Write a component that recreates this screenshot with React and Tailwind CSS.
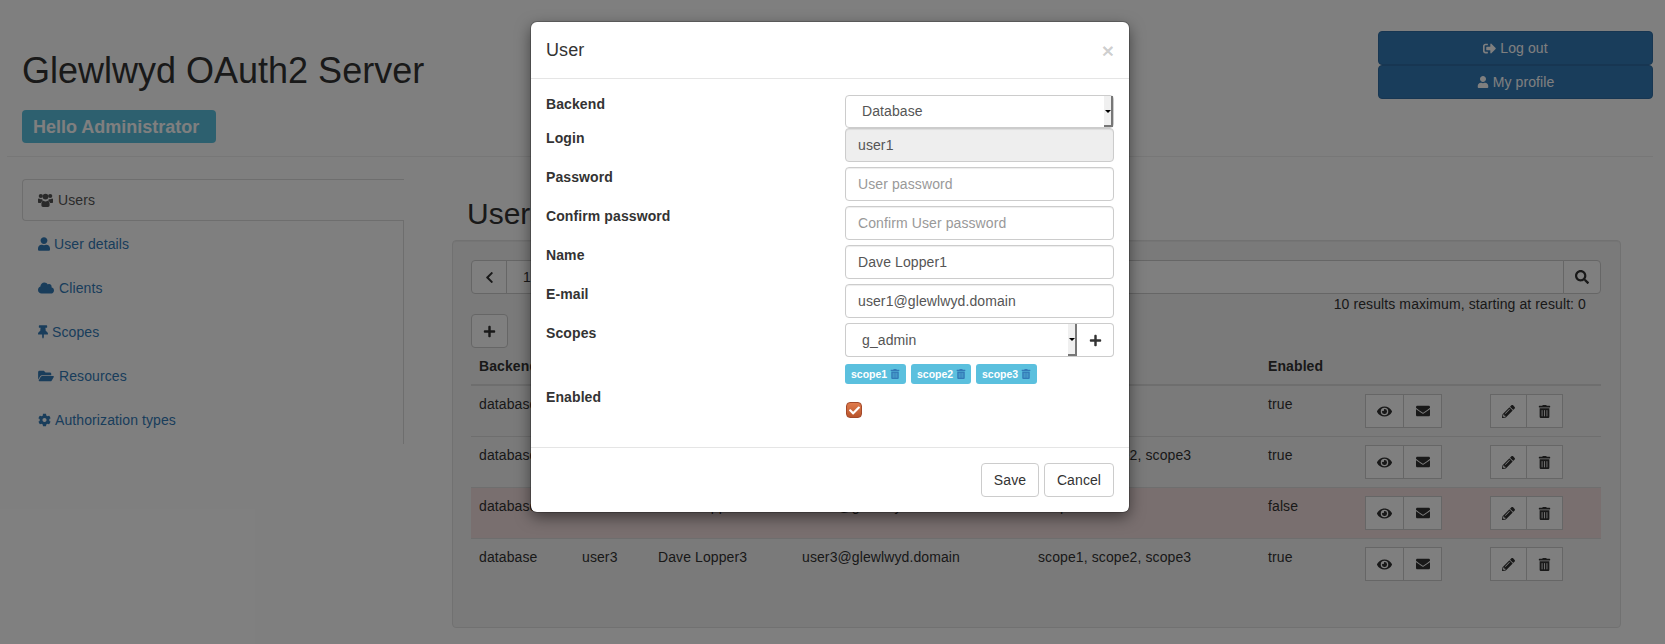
import React from "react";
import {
  FaUser,
  FaCloud,
  FaThumbtack,
  FaFolderOpen,
  FaCog,
  FaEye,
  FaEnvelope,
  FaPencilAlt,
  FaTrashAlt,
  FaPlus,
  FaSearch,
  FaChevronLeft,
  FaCheck,
  FaSignOutAlt,
} from "react-icons/fa";

const navItems = [
  { label: "User details", icon: FaUser, size: "w-[12px]", gap: "ml-[4px]" },
  { label: "Clients", icon: FaCloud, size: "w-[16px]", gap: "ml-[5px]" },
  { label: "Scopes", icon: FaThumbtack, size: "w-[10px]", gap: "ml-[4px]" },
  { label: "Resources", icon: FaFolderOpen, size: "w-[16px]", gap: "ml-[5px]" },
  { label: "Authorization types", icon: FaCog, size: "w-[13px]", gap: "ml-[4px]" },
];

const rows = [
  { login: "admin", name: "The Boss", email: "boss@glewlwyd.domain", scopes: "g_admin", enabled: "true" },
  { login: "user1", name: "Dave Lopper1", email: "user1@glewlwyd.domain", scopes: "scope1, scope2, scope3", enabled: "true" },
  { login: "user2", name: "Dave Lopper2", email: "user2@glewlwyd.domain", scopes: "scope1", enabled: "false", danger: true },
  { login: "user3", name: "Dave Lopper3", email: "user3@glewlwyd.domain", scopes: "scope1, scope2, scope3", enabled: "true" },
];

// font awesome 4 style users icon, the package one is too thin
const UsersIcon = () => (
  <svg width="15" height="14" viewBox="0 0 15 14" fill="currentColor">
    <circle cx="2.8" cy="3" r="2.1" />
    <circle cx="12.2" cy="3" r="2.1" />
    <circle cx="7.5" cy="3.6" r="2.9" />
    <path d="M0 6.6C0 5.9.5 5.6 1 5.6c.6.5 1.200.7 1.900.7.500 0 .900-.1 1.300-.3-.1.700.2 1.500.7 2-1 .3-1.800 1.100-2.100 2.100H1c-.6 0-1-.4-1-1V6.600z" />
    <path d="M15 6.600c0-.7-.5-1-1-1-.6.5-1.200.7-1.900.7-.5 0-.9-.1-1.300-.3.1.700-.2 1.500-.7 2 1 .3 1.800 1.100 2.100 2.100H14c.6 0 1-.4 1-1V6.600z" />
    <path d="M3.400 10.500c0-1.500 1-2.700 2.100-2.700.6.500 1.300.8 2 .8s1.400-.3 2-.8c1.100 0 2.100 1.200 2.100 2.700v1.800c0 .9-.7 1.700-1.600 1.700H5c-.9 0-1.600-.8-1.600-1.700v-1.800z" />
  </svg>
);

const IconBtn = ({ icon: Icon, width, size = 14, first }) => (
  <div
    className={`flex h-[34px] items-center justify-center border border-[#ccc] bg-white text-[#333] ${width} ${first ? "" : "-ml-px"}`}
  >
    <Icon size={size} />
  </div>
);

const Field = ({ label, top = "", children }) => (
  <div className="flex">
    <label className={`w-[299px] font-bold ${top}`}>{label}</label>
    <div className="w-[269px]">{children}</div>
  </div>
);

const inputClass =
  "block h-[34px] w-full rounded border border-[#ccc] px-3 text-sm text-[#555] shadow-[inset_0_1px_1px_rgba(0,0,0,0.075)] placeholder:text-[#999]";

const SelectBox = ({ value, className }) => (
  <div className={`relative flex items-center bg-white pb-px pl-[16px] text-sm text-[#555] ${className}`}>
    {value}
    <div className="absolute top-0 right-0 bottom-0 w-[9px] border-r-2 border-b-2 border-[#777] bg-[#f0f0f0]">
      <div className="absolute top-[14px] left-[1px] h-0 w-0 border-x-[3px] border-t-[3px] border-x-transparent border-t-black" />
    </div>
  </div>
);

const ScopePill = ({ name, width }) => (
  <span className={`flex h-[20px] items-center gap-[3px] rounded-[3px] bg-[#5bc0de] pl-[6px] text-[10.5px] font-bold tracking-normal text-white ${width}`}>
    {name}
    <FaTrashAlt size={10} className="text-[#337ab7]" />
  </span>
);

const UserModal = () => (
  <div className="absolute top-[22px] left-[531px] w-[598px] rounded-md bg-white text-sm text-[#333] shadow-[0_5px_15px_rgba(0,0,0,0.5)] ring-1 ring-black/20">
    {/* HEADER */}
    <div className="flex h-[57px] items-center justify-between border-b border-[#e5e5e5] px-[15px]">
      <h4 className="text-lg">User</h4>
      <span className="text-[21px] leading-none font-bold text-black/20">×</span>
    </div>
    {/* BODY */}
    <div className="h-[368px] pt-[16px] pl-[15px]">
      <Field label="Backend" top="-mt-px">
        <SelectBox value="Database" className="h-[33px] rounded border border-[#ccc]" />
      </Field>
      <Field label="Login">
        <input className={`${inputClass} bg-[#eee]`} value="user1" disabled readOnly />
      </Field>
      <div className="mt-[5px]">
        <Field label="Password">
          <input className={inputClass} placeholder="User password" readOnly />
        </Field>
      </div>
      <div className="mt-[5px]">
        <Field label="Confirm password">
          <input className={inputClass} placeholder="Confirm User password" readOnly />
        </Field>
      </div>
      <div className="mt-[5px]">
        <Field label="Name">
          <input className={inputClass} value="Dave Lopper1" readOnly />
        </Field>
      </div>
      <div className="mt-[5px]">
        <Field label="E-mail">
          <input className={inputClass} value="user1@glewlwyd.domain" readOnly />
        </Field>
      </div>
      <div className="mt-[5px]">
        <Field label="Scopes">
          <div className="flex h-[34px]">
            <SelectBox value="g_admin" className="flex-1 rounded-l border-y border-l border-[#ccc]" />
            <div className="flex w-[37px] items-center justify-center rounded-r border border-l-0 border-[#ccc] text-[#333]">
              <FaPlus size={13} />
            </div>
          </div>
          <div className="mt-[7px] flex gap-[5px]">
            <ScopePill name="scope1" width="w-[61px]" />
            <ScopePill name="scope2" width="w-[60px]" />
            <ScopePill name="scope3" width="w-[61px]" />
          </div>
        </Field>
      </div>
      <div className="mt-[3px]">
        <Field label="Enabled">
          <div className="mt-[15px] ml-[1px] flex h-[16px] w-[16px] items-center justify-center rounded-[4px] border border-[#a3492a] bg-gradient-to-b from-[#e07b4c] to-[#b9552c] text-white">
            <FaCheck size={11} />
          </div>
        </Field>
      </div>
    </div>
    {/* FOOTER */}
    <div className="flex h-[65px] items-center justify-end gap-[5px] border-t border-[#e5e5e5] pr-[15px]">
      <div className="flex h-[34px] w-[58px] items-center justify-center rounded border border-[#ccc]">Save</div>
      <div className="flex h-[34px] w-[70px] items-center justify-center rounded border border-[#ccc]">Cancel</div>
    </div>
  </div>
);

const App = () => {
  return (
    <div className="relative h-[644px] overflow-hidden bg-white font-['Liberation_Sans',Arial,sans-serif] text-sm tracking-[0.1px] text-[#333]">
      <div className="pr-[12px] pl-[7px]">
        {/* PAGE HEADER */}
        <div className="flex h-[157px] justify-between border-b border-[#eee] pl-[15px]">
          <div className="pt-[51px]">
            <h1 className="text-4xl leading-[40px] font-normal tracking-normal">Glewlwyd OAuth2 Server</h1>
            <div className="mt-[19px] flex h-[33px] w-[194px] items-center rounded bg-[#5bc0de] pl-[11px] text-lg font-bold tracking-normal text-white">
              Hello Administrator
            </div>
          </div>
          <div className="w-[275px] pt-[31px]">
            <div className="flex h-[34px] items-center justify-center gap-1 rounded border border-[#2e6da4] bg-[#337ab7] text-white">
              <FaSignOutAlt size={13} /> Log out
            </div>
            <div className="flex h-[34px] items-center justify-center gap-1 rounded border border-[#2e6da4] bg-[#337ab7] text-white">
              <FaUser size={12} /> My profile
            </div>
          </div>
        </div>

        <div className="flex pl-[15px]">
          {/* SIDE NAV */}
          <div className="mt-[22px] w-[382px] shrink-0">
            <div className="flex h-[42px] items-center gap-[5px] rounded-l border border-r-0 border-[#ddd] pl-[15px] text-[#555]">
              <UsersIcon /> Users
            </div>
            <div className="h-[223px] border-r border-[#ddd] pt-[1px]">
              {navItems.map((item) => (
                <div key={item.label} className="flex h-[44px] items-center pl-[16px] text-[#337ab7]">
                  <item.icon className={item.size} size={14} />
                  <span className={item.gap}>{item.label}</span>
                </div>
              ))}
            </div>
          </div>

          {/* MAIN CONTENT */}
          <div className="ml-[48px] w-[1169px] shrink-0">
            <h2 className="mt-[40px] ml-[15px] text-3xl leading-[33px] tracking-normal">Users</h2>
            <div className="mt-[10px] h-[388px] rounded border border-[#e3e3e3] bg-[#f5f5f5] pt-[19px] pr-[19px] pl-[18px] shadow-[inset_0_1px_1px_rgba(0,0,0,0.05)]">
              <div className="flex h-[34px]">
                <div className="flex w-[36px] items-center justify-center rounded-l border border-[#ccc] bg-white text-[#333]">
                  <FaChevronLeft size={13} />
                </div>
                <div className="-ml-px flex-1 border border-[#ccc] bg-white py-[6px] pl-[16px]">10</div>
                <div className="-ml-px flex w-[38px] items-center justify-center rounded-r border border-[#ccc] bg-white text-[#333]">
                  <FaSearch size={14} />
                </div>
              </div>
              <div className="pr-[15px] text-right leading-[20px]">10 results maximum, starting at result: 0</div>
              <div className="flex h-[34px] w-[37px] items-center justify-center rounded border border-[#ccc] bg-white text-[#333]">
                <FaPlus size={13} />
              </div>
              {/* USERS TABLE */}
              <div className="grid grid-cols-[103px_76px_144px_236px_230px_97px_125px_auto]">
                <div className="contents font-bold">
                  {["Backend", "Login", "Name", "E-mail", "Scopes", "Enabled", "", ""].map((head, i) => (
                    <div key={i} className="h-[38px] border-b-2 border-[#ddd] pt-[8px] pl-[8px] leading-[20px]">
                      {head}
                    </div>
                  ))}
                </div>
                {rows.map((row, i) => {
                  const cell = `pt-[8px] pl-[8px] leading-[20px] ${
                    i === 0 ? "h-[50px]" : "h-[51px] border-t border-[#ddd]"
                  } ${row.danger ? "bg-[#f2dede]" : ""}`;
                  return (
                    <div key={row.login} className="contents">
                      <div className={cell}>database</div>
                      <div className={cell}>{row.login}</div>
                      <div className={cell}>{row.name}</div>
                      <div className={cell}>{row.email}</div>
                      <div className={cell}>{row.scopes}</div>
                      <div className={cell}>{row.enabled}</div>
                      <div className={`${cell} flex`}>
                        <IconBtn icon={FaEye} size={15} width="w-[39px]" first />
                        <IconBtn icon={FaEnvelope} width="w-[39px]" />
                      </div>
                      <div className={`${cell} flex`}>
                        <IconBtn icon={FaPencilAlt} size={13} width="w-[37px]" first />
                        <IconBtn icon={FaTrashAlt} size={13} width="w-[37px]" />
                      </div>
                    </div>
                  );
                })}
              </div>
            </div>
          </div>
        </div>
      </div>

      {/* MODAL BACKDROP */}
      <div className="absolute inset-0 bg-black/50" />
      <UserModal />
    </div>
  );
};

export default App;
